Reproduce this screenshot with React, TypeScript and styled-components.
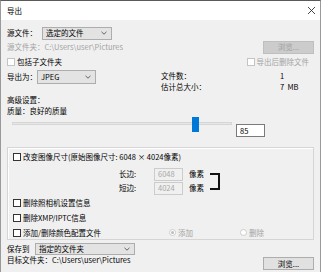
import React from 'react';
import styled, { createGlobalStyle } from 'styled-components';

const Global = createGlobalStyle`
  html, body { margin: 0; padding: 0; background: #f0f0f0; }
  body {
    font-family: "Noto Sans CJK SC", "Noto Sans", sans-serif;
    font-size: 7.5px;
    color: #000000;
  }
`;

const Window = styled.div`
  width: 321px;
  height: 272px;
  box-sizing: border-box;
  overflow: hidden;
  border-top: 1px solid #5a5a5a;
  border-left: 1px solid #9a9a9a;
  border-right: 1px solid #9a9a9a;
  background: #f0f0f0;
  display: flex;
  flex-direction: column;
`;

const TitleBar = styled.div`
  height: 19px;
  flex-shrink: 0;
  background: #ffffff;
  display: flex;
  align-items: center;
  justify-content: space-between;
  padding: 0 4px 0 6px;
`;

const Body = styled.div`
  flex: 1;
  display: flex;
  flex-direction: column;
  padding: 0 6px 0 6px;
`;

const Row = styled.div<{ $h: number; $mt?: number }>`
  height: ${p => p.$h}px;
  margin-top: ${p => p.$mt ?? 0}px;
  display: flex;
  align-items: center;
  flex-shrink: 0;
`;

const Label = styled.span<{ $w?: number; $muted?: boolean }>`
  ${p => (p.$w ? `width: ${p.$w}px; flex-shrink: 0;` : '')}
  color: ${p => (p.$muted ? '#a3a3a3' : '#000000')};
  white-space: nowrap;
  line-height: 10px;
`;

const Select = styled.div<{ $w: number; $h: number }>`
  width: ${p => p.$w}px;
  height: ${p => p.$h}px;
  box-sizing: border-box;
  border: 1px solid #adadad;
  background: #e3e3e3;
  display: flex;
  align-items: center;
  justify-content: space-between;
  padding: 0 4px 0 3px;
  flex-shrink: 0;
  line-height: 10px;
`;

const Button = styled.div<{ $disabled?: boolean }>`
  width: 51px;
  height: 13px;
  box-sizing: border-box;
  border: 1px solid ${p => (p.$disabled ? '#bfbfbf' : '#adadad')};
  background: ${p => (p.$disabled ? '#cccccc' : '#e1e1e1')};
  color: ${p => (p.$disabled ? '#a0a0a0' : '#000000')};
  display: flex;
  align-items: center;
  justify-content: center;
  margin-left: auto;
  flex-shrink: 0;
  line-height: 10px;
`;

const Check = styled.span<{ $light?: boolean }>`
  width: 8px;
  height: 8px;
  box-sizing: border-box;
  border: 1px solid ${p => (p.$light ? '#c4c4c4' : '#333333')};
  background: #ffffff;
  flex-shrink: 0;
  margin-right: 2px;
`;

const CheckItem = styled.div<{ $w?: number; $pushRight?: boolean }>`
  display: flex;
  align-items: center;
  ${p => (p.$w ? `width: ${p.$w}px;` : '')}
  ${p => (p.$pushRight ? 'margin-left: auto; margin-right: 5px;' : '')}
`;

const InfoRow = styled.div`
  height: 24px;
  margin-top: 1px;
  display: flex;
  align-items: flex-start;
  flex-shrink: 0;
`;

const InfoLabel = styled(Label)`
  line-height: 14px;
`;

const InfoGrid = styled.div`
  margin-left: 65px;
  display: grid;
  grid-template-columns: 119px auto;
  grid-auto-rows: 11px;
  align-items: center;
  line-height: 10px;
`;

const Line = styled.div`
  height: 11px;
  line-height: 11px;
  flex-shrink: 0;
  white-space: nowrap;
`;

const SliderRow = styled.div`
  height: 22px;
  display: flex;
  align-items: flex-start;
  flex-shrink: 0;
`;

const Track = styled.div`
  position: relative;
  margin-left: 5px;
  width: 220px;
  height: 16px;
`;

const TrackLine = styled.div`
  position: absolute;
  left: 0;
  right: 0;
  top: 6px;
  height: 3px;
  box-sizing: border-box;
  border: 1px solid #d6d6d6;
  background: #e7e7e7;
`;

const Thumb = styled.div`
  position: absolute;
  top: 1px;
  width: 7px;
  height: 15px;
  background: #0078d7;
`;

const TextBox = styled.div<{ $w: number; $disabled?: boolean }>`
  width: ${p => p.$w}px;
  height: 13px;
  box-sizing: border-box;
  border: 1px solid ${p => (p.$disabled ? '#cccccc' : '#7a7a7a')};
  background: ${p => (p.$disabled ? '#f0f0f0' : '#ffffff')};
  color: ${p => (p.$disabled ? '#a8a8a8' : '#000000')};
  display: flex;
  align-items: center;
  padding-left: 3px;
  flex-shrink: 0;
  line-height: 10px;
`;

const ValueBox = styled(TextBox)`
  margin-left: 4px;
  margin-top: 8px;
`;

const Group = styled.div`
  margin-top: 9px;
  height: 93px;
  box-sizing: border-box;
  border: 1px solid #d5d5d5;
  box-shadow: inset 1px 1px 0 #ffffff;
  padding: 0 5px;
  display: flex;
  flex-direction: column;
  flex-shrink: 0;
`;

const SizeBlock = styled.div`
  margin-top: 2px;
  padding-left: 106px;
  display: flex;
  align-items: center;
  flex-shrink: 0;
`;

const SizeRows = styled.div`
  display: grid;
  grid-template-columns: 29px 29px auto;
  grid-auto-rows: 14px;
  column-gap: 6px;
  align-items: center;
  line-height: 10px;
`;

const SizeLabel = styled.span`
  white-space: nowrap;
  margin-right: -6px;
`;

const Bracket = styled.div`
  margin-left: 6px;
  width: 10px;
  height: 17px;
  box-sizing: border-box;
  border: 2px solid #111111;
  border-left: none;
  flex-shrink: 0;
`;

const RadioItem = styled.div<{ $w?: number }>`
  display: flex;
  align-items: center;
  color: #a3a3a3;
  ${p => (p.$w ? `width: ${p.$w}px;` : '')}
  line-height: 10px;
`;

const Radio = styled.span<{ $on?: boolean }>`
  width: 7px;
  height: 7px;
  box-sizing: border-box;
  border-radius: 50%;
  border: 1px solid #cccccc;
  background: #ffffff;
  margin-right: 2px;
  display: flex;
  align-items: center;
  justify-content: center;
  &::after {
    content: '';
    width: 3px;
    height: 3px;
    border-radius: 50%;
    background: ${p => (p.$on ? '#bcbcbc' : 'transparent')};
  }
`;

const BottomRow = styled.div`
  height: 15px;
  display: flex;
  align-items: flex-start;
  flex-shrink: 0;
`;

const BottomButton = styled(Button)`
  margin-top: 2px;
`;

const Chevron = () => (
  <svg width="6" height="4" viewBox="0 0 6 4">
    <polyline points="0.5,0.8 3,3.2 5.5,0.8" fill="none" stroke="#555" strokeWidth="0.9" />
  </svg>
);

const CloseIcon = () => (
  <svg width="9" height="9" viewBox="0 0 9 9">
    <path d="M1 1 L8 8 M8 1 L1 8" stroke="#333" strokeWidth="0.9" />
  </svg>
);

export default function App() {
  return (
    <>
      <Global />
      <Window>
        <TitleBar>
          <Label>导出</Label>
          <CloseIcon />
        </TitleBar>
        <Body>
          <Row $h={14} $mt={6}>
            <Label $w={35}>源文件：</Label>
            <Select $w={70} $h={13}>
              <span>选定的文件</span>
              <Chevron />
            </Select>
          </Row>
          <Row $h={14}>
            <Label $muted>源文件夹：C:\Users\user\Pictures</Label>
            <Button $disabled>浏览...</Button>
          </Row>
          <Row $h={15}>
            <CheckItem>
              <Check $light />
              <Label>包括子文件夹</Label>
            </CheckItem>
            <CheckItem $pushRight>
              <Check $light />
              <Label $muted>导出后删除文件</Label>
            </CheckItem>
          </Row>
          <InfoRow>
            <InfoLabel $w={30}>导出为：</InfoLabel>
            <Select $w={59} $h={14}>
              <span>JPEG</span>
              <Chevron />
            </Select>
            <InfoGrid>
              <span>文件数：</span>
              <span>1</span>
              <span>估计总大小：</span>
              <span>7&nbsp;&nbsp;MB</span>
            </InfoGrid>
          </InfoRow>
          <Line>高级设置：</Line>
          <Line>质量：良好的质量</Line>
          <SliderRow>
            <Track>
              <TrackLine />
              <Thumb style={{ left: 180 }} />
            </Track>
            <ValueBox $w={29}>85</ValueBox>
          </SliderRow>
          <Group>
            <Row $h={17}>
              <Check />
              <Label>改变图像尺寸(原始图像尺寸: 6048 × 4024像素)</Label>
            </Row>
            <SizeBlock>
              <SizeRows>
                <SizeLabel>长边:</SizeLabel>
                <TextBox $w={29} $disabled>6048</TextBox>
                <Label>像素</Label>
                <SizeLabel>短边:</SizeLabel>
                <TextBox $w={29} $disabled>4024</TextBox>
                <Label>像素</Label>
              </SizeRows>
              <Bracket />
            </SizeBlock>
            <Row $h={14} $mt={1}>
              <Check />
              <Label>删除照相机设置信息</Label>
            </Row>
            <Row $h={14} $mt={1}>
              <Check />
              <Label>删除XMP/IPTC信息</Label>
            </Row>
            <Row $h={13} $mt={1}>
              <CheckItem $w={156}>
                <Check />
                <Label>添加/删除颜色配置文件</Label>
              </CheckItem>
              <RadioItem $w={71}>
                <Radio $on />
                <span>添加</span>
              </RadioItem>
              <RadioItem>
                <Radio />
                <span>删除</span>
              </RadioItem>
            </Row>
          </Group>
          <Row $h={12} $mt={3}>
            <Label $w={28}>保存到</Label>
            <Select $w={100} $h={12}>
              <span>指定的文件夹</span>
              <Chevron />
            </Select>
          </Row>
          <BottomRow>
            <Label>目标文件夹：C:\Users\user\Pictures</Label>
            <BottomButton>浏览...</BottomButton>
          </BottomRow>
        </Body>
      </Window>
    </>
  );
}
